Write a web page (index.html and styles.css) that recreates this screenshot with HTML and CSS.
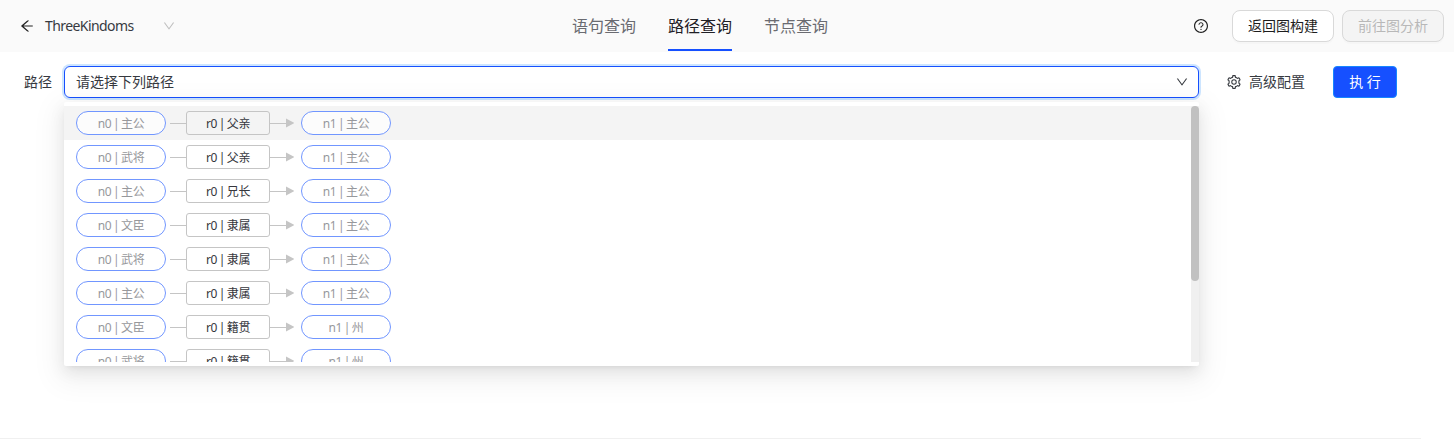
FILE: index.html
```html
<!DOCTYPE html>
<html lang="zh-CN">
<head>
<meta charset="utf-8">
<title>路径查询</title>
<link rel="stylesheet" href="styles.css">
</head>
<body>
<svg class="defs" width="0" height="0" aria-hidden="true">
  <symbol id="down" viewBox="64 64 896 896"><path d="M884 256h-75c-5.1 0-9.9 2.5-12.9 6.6L512 654.2 227.9 262.6c-3-4.1-7.8-6.6-12.9-6.6h-75c-6.5 0-10.3 7.4-6.5 12.7l352.6 486.1c12.8 17.6 39 17.6 51.7 0l352.6-486.1c3.9-5.3.1-12.7-6.4-12.7z"/></symbol>
  <symbol id="back" viewBox="64 64 896 896"><path d="M872 474H286.9l350.2-304c5.6-4.9 2.2-14-5.2-14h-88.5c-3.9 0-7.6 1.4-10.5 3.9L155 487.8a31.96 31.96 0 000 48.3L535.1 866c1.5 1.3 3.3 2 5.2 2h91.5c7.4 0 10.8-9.2 5.2-14L286.9 550H872c4.4 0 8-3.6 8-8v-60c0-4.4-3.6-8-8-8z"/></symbol>
  <symbol id="help" viewBox="64 64 896 896"><path d="M512 64C264.6 64 64 264.6 64 512s200.6 448 448 448 448-200.6 448-448S759.4 64 512 64zm0 820c-205.4 0-372-166.6-372-372s166.6-372 372-372 372 166.6 372 372-166.6 372-372 372z"/><path d="M623.6 316.7C593.6 290.4 554 276 512 276s-81.6 14.5-111.6 40.7C369.2 344 352 380.7 352 420v7.6c0 4.4 3.6 8 8 8h48c4.4 0 8-3.6 8-8V420c0-44.1 43.1-80 96-80s96 35.9 96 80c0 31.1-22 59.6-56.1 72.7-21.2 8.1-39.2 22.3-52.1 40.9-13.1 19-19.9 41.8-19.9 64.9V620c0 4.4 3.6 8 8 8h48c4.4 0 8-3.6 8-8v-22.7a48.3 48.3 0 0130.9-44.8c59-22.7 97.1-74.7 97.1-132.5.1-39.3-17.1-76-48.3-103.3zM472 732a40 40 0 1080 0 40 40 0 10-80 0z"/></symbol>
  <symbol id="gear" viewBox="64 64 896 896"><path fill-rule="evenodd" d="M924.8 625.7l-65.5-56c3.1-19 4.7-38.4 4.7-57.8s-1.6-38.8-4.7-57.8l65.5-56a32.03 32.03 0 009.3-35.2l-.9-2.6a443.74 443.74 0 00-79.7-137.9l-1.8-2.1a32.12 32.12 0 00-35.1-9.5l-81.3 28.9c-30-24.6-63.5-44-99.7-57.6l-15.7-85a32.05 32.05 0 00-25.8-25.7l-2.7-.5c-52.1-9.4-106.9-9.4-159 0l-2.7.5a32.05 32.05 0 00-25.8 25.7l-15.8 85.4a351.86 351.86 0 00-99 57.4l-81.9-29.1a32 32 0 00-35.1 9.5l-1.8 2.1a446.02 446.02 0 00-79.7 137.9l-.9 2.6c-4.5 12.5-.8 26.5 9.3 35.2l66.3 56.6c-3.1 18.8-4.6 38-4.6 57.1 0 19.2 1.5 38.4 4.6 57.1L99 625.5a32.03 32.03 0 00-9.3 35.2l.9 2.6c18.1 50.4 44.9 96.9 79.7 137.9l1.8 2.1a32.12 32.12 0 0035.1 9.5l81.9-29.1c29.8 24.5 63.1 43.9 99 57.4l15.8 85.4a32.05 32.05 0 0025.8 25.7l2.7.5a449.4 449.4 0 00159 0l2.7-.5a32.05 32.05 0 0025.8-25.7l15.7-85a350 350 0 0099.7-57.6l81.3 28.9a32 32 0 0035.1-9.5l1.8-2.1c34.8-41.1 61.6-87.5 79.7-137.9l.9-2.6c4.5-12.3.8-26.3-9.3-35zM788.3 465.9c2.5 15.1 3.8 30.6 3.8 46.1s-1.3 31-3.8 46.1l-6.6 40.1 74.7 63.9a370.03 370.03 0 01-42.6 73.6L721 702.8l-31.4 25.8c-23.9 19.6-50.5 35-79.3 45.8l-38.1 14.3-17.9 97a377.5 377.5 0 01-85 0l-17.9-97.2-37.8-14.5c-28.5-10.8-55-26.2-78.7-45.7l-31.4-25.9-93.4 33.2c-17-22.9-31.2-47.6-42.6-73.6l75.5-64.5-6.5-40c-2.4-14.9-3.7-30.3-3.7-45.5 0-15.3 1.2-30.6 3.7-45.5l6.5-40-75.5-64.5c11.3-26.1 25.6-50.7 42.6-73.6l93.4 33.2 31.4-25.9c23.7-19.5 50.2-34.9 78.7-45.7l37.9-14.3 17.9-97.2c28.1-3.2 56.8-3.2 85 0l17.9 97 38.1 14.3c28.7 10.8 55.4 26.2 79.3 45.8l31.4 25.8 92.8-32.9c17 22.9 31.2 47.6 42.6 73.6L781.8 426l6.5 39.9z"/><path fill-rule="evenodd" d="M512 336a176 176 0 100 352 176 176 0 000-352zm0 64a112 112 0 110 224 112 112 0 010-224z"/></symbol>
  <symbol id="arrow" viewBox="0 0 24 10"><path d="M0 5h17v1H0zM16 .5L24.500 5 16 9.500z"/></symbol>
</svg>

<header class="header">
  <div class="brand">
    <svg class="icon-back"><use href="#back"/></svg>
    <span class="name">ThreeKindoms</span>
    <svg class="icon-down"><use href="#down"/></svg>
  </div>
  <nav class="tabs">
    <a class="tab">语句查询</a>
    <a class="tab active">路径查询</a>
    <a class="tab">节点查询</a>
  </nav>
  <div class="actions">
    <svg class="icon-help"><use href="#help"/></svg>
    <button class="btn">返回图构建</button>
    <button class="btn disabled" disabled>前往图分析</button>
  </div>
</header>

<main class="panel">
  <div class="form">
    <label class="label">路径</label>
    <div class="select">
      <span>请选择下列路径</span>
      <svg class="icon-select"><use href="#down"/></svg>
      <div class="dropdown">
        <div class="list">
          <div class="option hover"><span class="node">n0 | 主公</span><i class="line"></i><span class="edge">r0 | 父亲</span><svg class="arrow"><use href="#arrow"/></svg><span class="node">n1 | 主公</span></div>
          <div class="option"><span class="node">n0 | 武将</span><i class="line"></i><span class="edge">r0 | 父亲</span><svg class="arrow"><use href="#arrow"/></svg><span class="node">n1 | 主公</span></div>
          <div class="option"><span class="node">n0 | 主公</span><i class="line"></i><span class="edge">r0 | 兄长</span><svg class="arrow"><use href="#arrow"/></svg><span class="node">n1 | 主公</span></div>
          <div class="option"><span class="node">n0 | 文臣</span><i class="line"></i><span class="edge">r0 | 隶属</span><svg class="arrow"><use href="#arrow"/></svg><span class="node">n1 | 主公</span></div>
          <div class="option"><span class="node">n0 | 武将</span><i class="line"></i><span class="edge">r0 | 隶属</span><svg class="arrow"><use href="#arrow"/></svg><span class="node">n1 | 主公</span></div>
          <div class="option"><span class="node">n0 | 主公</span><i class="line"></i><span class="edge">r0 | 隶属</span><svg class="arrow"><use href="#arrow"/></svg><span class="node">n1 | 主公</span></div>
          <div class="option"><span class="node">n0 | 文臣</span><i class="line"></i><span class="edge">r0 | 籍贯</span><svg class="arrow"><use href="#arrow"/></svg><span class="node">n1 | 州</span></div>
          <div class="option"><span class="node">n0 | 武将</span><i class="line"></i><span class="edge">r0 | 籍贯</span><svg class="arrow"><use href="#arrow"/></svg><span class="node">n1 | 州</span></div>
        </div>
        <div class="track"><div class="thumb"></div></div>
      </div>
    </div>
    <div class="config"><svg class="icon-gear"><use href="#gear"/></svg><span>高级配置</span></div>
    <button class="run">执 行</button>
  </div>
</main>
</body>
</html>
```
FILE: styles.css
```css
* { box-sizing: border-box; }
body {
  margin: 0;
  height: 439px;
  overflow: hidden;
  display: flex;
  flex-direction: column;
  background: #fff;
  color: #36393f;
  font: 14px/22px "Noto Sans", "Noto Sans CJK SC", sans-serif;
}
svg { display: block; flex: none; fill: currentColor; }
.defs { position: absolute; }
button { font: inherit; padding: 0; }

.header {
  flex: none;
  height: 52px;
  padding: 0 10px 0 20px;
  background: #fafafa;
  display: grid;
  grid-template-columns: 552px 256px 1fr;
}
.brand { display: flex; align-items: center; }
.icon-back { width: 14px; height: 14px; color: #222; }
.name { width: 118px; margin-left: 11px; letter-spacing: -0.58px; }
.icon-down { width: 12px; height: 12px; color: #bfbfbf; }
.tabs { display: flex; gap: 32px; }
.tab {
  width: 64px;
  height: 51px;
  padding-top: 1px;
  font-size: 16px;
  line-height: 50px;
  color: #6a6b71;
  white-space: nowrap;
}
.active { color: #1f2026; border-bottom: 2px solid #1650ff; }
.actions { display: flex; align-items: center; justify-content: flex-end; }
.icon-help { width: 14px; height: 14px; margin-right: 24px; color: #222; }
.btn {
  width: 102px;
  height: 32px;
  border: 1px solid #d9d9d9;
  border-radius: 8px;
  background: #fff;
  color: #1d1d1d;
  box-shadow: 0 2px 0 rgba(0, 0, 0, .016);
}
.btn + .btn { margin-left: 8px; }
.disabled { background: #f4f4f4; color: #b8b8b8; }

.panel {
  flex: 1;
  width: 1421px;
  padding: 14px 24px 0;
  border-bottom: 1px solid #f0f0f0;
}
.form { display: flex; align-items: center; height: 32px; }
.label { width: 40px; }
.select {
  position: relative;
  width: 1135px;
  height: 32px;
  padding: 0 10px 0 11px;
  display: flex;
  align-items: center;
  justify-content: space-between;
  border: 1px solid #1650ff;
  border-radius: 6px;
  box-shadow: 0 0 0 2px rgba(5, 125, 255, .2);
}
.icon-select { width: 12px; height: 12px; }
.dropdown {
  position: absolute;
  top: 35px;
  left: -1px;
  width: 1135px;
  height: 264px;
  padding: 4px 0;
  display: flex;
  background: #fff;
  border-radius: 2px;
  box-shadow: 0 3px 6px -4px rgba(0, 0, 0, .12), 0 6px 16px 0 rgba(0, 0, 0, .08), 0 9px 28px 8px rgba(0, 0, 0, .05);
}
.list { flex: 1; height: 256px; overflow: hidden; }
.option { display: flex; align-items: center; height: 34px; padding: 0 12px; font-size: 12px; }
.hover { background: #f4f4f4; }
.node, .edge {
  height: 24px;
  line-height: 23px;
  text-align: center;
  white-space: nowrap;
  letter-spacing: -0.35px;
  word-spacing: -1px;
}
.node { width: 90px; border: 1px solid #7196ff; border-radius: 12px; background: rgba(255, 255, 255, .7); color: #97989c; }
.edge { width: 84px; border: 1px solid #c5c5c5; border-radius: 3px; color: #36373d; }
.line { width: 16px; height: 1px; margin-left: 4px; background: #c5c5c5; }
.arrow { width: 24px; height: 10px; margin-right: 7px; color: #c5c5c5; }
.track { width: 8px; height: 256px; background: #f0f0f0; }
.thumb { height: 175px; border-radius: 4px; background: #c1c1c1; }

.config { display: flex; align-items: center; width: 106px; margin-left: 28px; }
.icon-gear { width: 14px; height: 14px; margin-right: 8px; }
.run {
  width: 64px;
  height: 32px;
  border: 1px solid #1687ff;
  border-radius: 4px;
  background: #1650ff;
  color: #fff;
}
```
